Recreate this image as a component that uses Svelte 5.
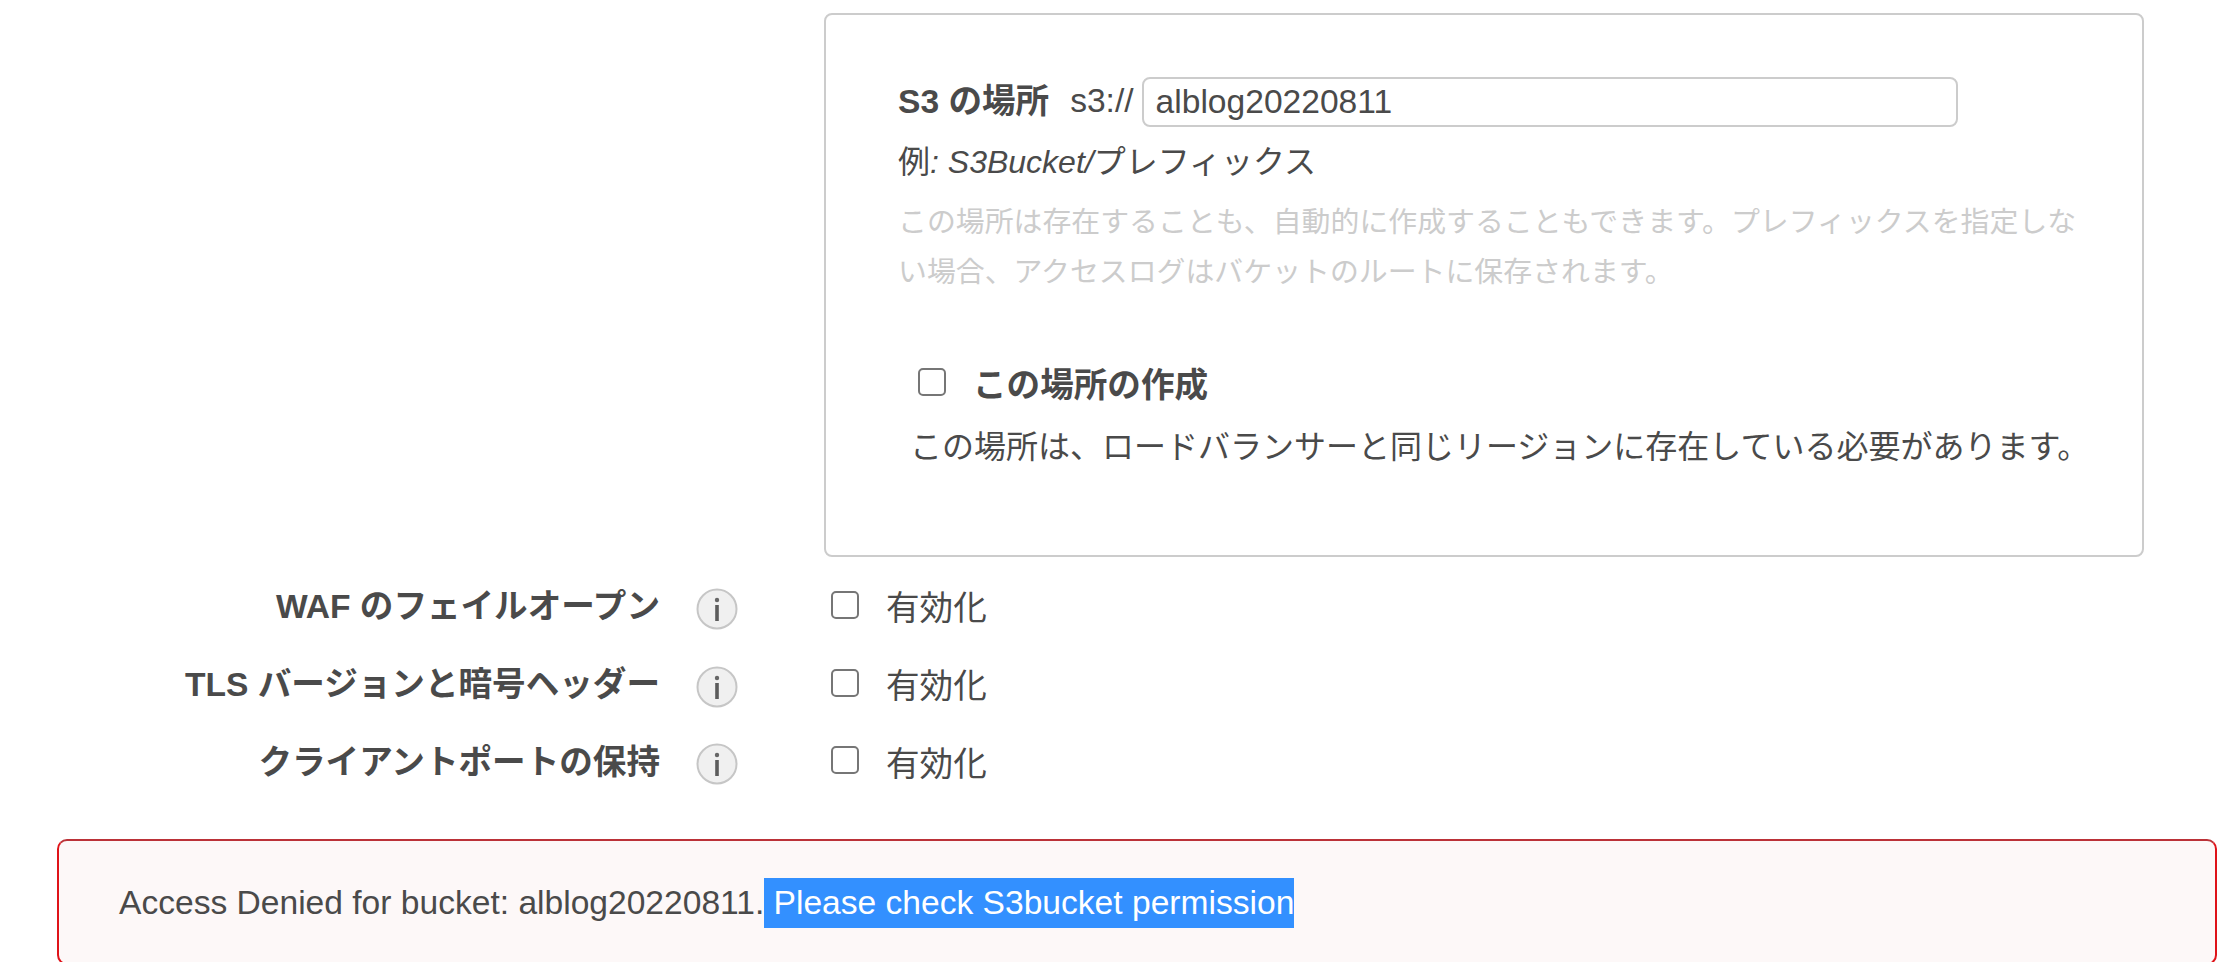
<script>
  const rows = [
    'WAF のフェイルオープン',
    'TLS バージョンと暗号ヘッダー',
    'クライアントポートの保持'
  ];
</script>

<div class="page">
  <section class="box">
    <div class="loc">
      <span class="strong">S3 の場所</span>
      <span class="proto">s3://</span>
      <input class="field" value="alblog20220811" />
    </div>
    <div class="eg">例<em>: S3Bucket/</em>プレフィックス</div>
    <p class="hint">この場所は存在することも、自動的に作成することもできます。プレフィックスを指定しない場合、アクセスログはバケットのルートに保存されます。</p>
    <label class="create"><span class="check"></span><span class="strong">この場所の作成</span></label>
    <div class="note">この場所は、ロードバランサーと同じリージョンに存在している必要があります。</div>
  </section>

  <div class="rows">
    {#each rows as r}
      <div class="row">
        <span class="strong lab">{r}</span>
        <svg class="info" viewBox="0 0 42 42" width="42" height="42" aria-hidden="true">
          <circle cx="21" cy="21" r="19.5" fill="#f0f0f0" stroke="#c6c6c6" stroke-width="2"/>
          <circle cx="21" cy="12" r="2.2" fill="#666"/>
          <rect x="19.2" y="17" width="3.6" height="16" fill="#5c5c5c"/>
        </svg>
        <span class="check"></span>
        <span class="en">有効化</span>
      </div>
    {/each}
  </div>

  <div class="alert">Access Denied for bucket: alblog20220811.<span class="sel">{' '}Please check S3bucket permission</span></div>
</div>

<style>
  :global(body) { margin: 0; background: #fff; overflow: hidden; }
  .page {
    width: 2221px; height: 962px; overflow: hidden; box-sizing: border-box;
    padding-top: 13px; color: #4a4a4a;
    font-family: "Liberation Sans", "Noto Sans CJK JP", sans-serif;
    font-size: 33.6px;
  }
  .box {
    box-sizing: border-box; width: 1320px; height: 544px; margin-left: 824px;
    border: 2px solid #ccc; border-radius: 8px; padding: 62px 60px 0 72px;
  }
  .strong { font-weight: 700; }
  .loc { display: flex; align-items: center; height: 50px; }
  .loc .strong { margin-top: -8px; }
  .proto { margin-left: 21px; margin-top: -3px; }
  .field {
    box-sizing: border-box; width: 816px; height: 50px; margin-left: 8px; padding: 0 12px;
    border: 2px solid #ccc; border-radius: 8px; outline: none;
    font: inherit; color: #4a4a4a; background: #fff;
  }
  .eg { margin-top: 10px; line-height: 50px; font-size: 32px; }
  .hint { margin: 10px 0 0; color: #ccc; line-height: 50px; width: 1190px; font-size: 28.9px; }
  .create { display: flex; align-items: center; gap: 27px; margin-top: 60px; margin-left: 20px; height: 50px; }
  .note { margin-left: 12px; margin-top: 15px; line-height: 50px; white-space: nowrap; font-size: 32px; }
  .check {
    display: block; flex: none; box-sizing: border-box; width: 28px; height: 28px;
    border: 2px solid #767676; border-radius: 5px; background: #fff;
  }
  .rows { margin-top: 14px; }
  .row { display: flex; align-items: center; height: 77.7px; }
  .lab { width: 660px; text-align: right; flex: none; margin-top: -12px; }
  .info { margin-left: 36px; flex: none; margin-top: -2px; }
  .row .check { margin-left: 93px; margin-top: -10px; }
  .en { margin-left: 27px; margin-top: -8px; }
  .alert {
    box-sizing: border-box; width: 2160px; height: 126px; margin-left: 57px; margin-top: 35px;
    border: 2px solid #df1319; border-top-color: #bb3238; border-radius: 10px; background: #fdf8f8;
    padding: 37px 60px; line-height: 50px; white-space: pre;
  }
  .sel { display: inline-block; background: #3390ff; color: #fff; }
</style>
